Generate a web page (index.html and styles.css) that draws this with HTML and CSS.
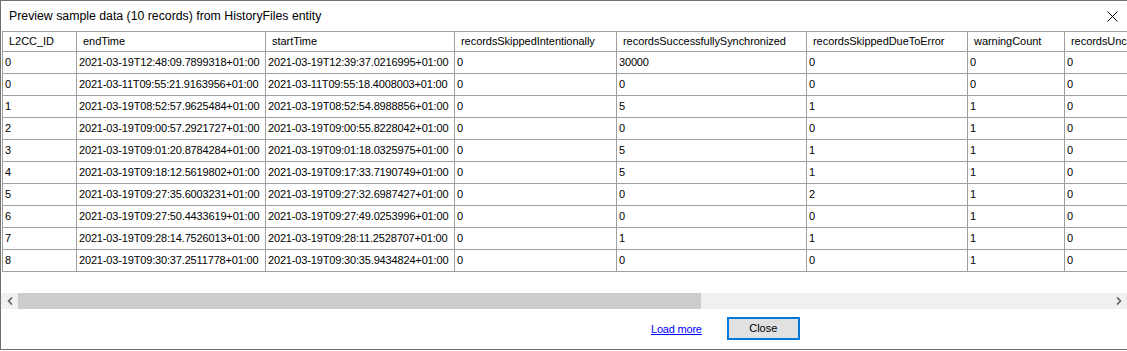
FILE: index.html
```html
<!DOCTYPE html>
<html lang="en">
<head>
    <meta charset="UTF-8">
    <title>Preview sample data</title>
    <link rel="stylesheet" href="styles.css">
</head>
<body>
    <div class="janela">
        <div class="titulo">
            <span>Preview sample data (10 records) from HistoryFiles entity</span>
            <svg class="fechar" width="11" height="11" viewBox="0 0 11 11">
                <path d="M0.5 0.5 L10.5 10.5 M10.5 0.5 L0.5 10.5" stroke="#000" stroke-width="1"/>
            </svg>
        </div>

        <div class="area-grade">
            <div class="grade">
                <div class="cab">L2CC_ID</div>
                <div class="cab">endTime</div>
                <div class="cab">startTime</div>
                <div class="cab">recordsSkippedIntentionally</div>
                <div class="cab">recordsSuccessfullySynchronized</div>
                <div class="cab">recordsSkippedDueToError</div>
                <div class="cab">warningCount</div>
                <div class="cab">recordsUnchanged</div>

                <div class="cel">0</div><div class="cel">2021-03-19T12:48:09.7899318+01:00</div><div class="cel">2021-03-19T12:39:37.0216995+01:00</div><div class="cel">0</div><div class="cel">30000</div><div class="cel">0</div><div class="cel">0</div><div class="cel">0</div>
                <div class="cel">0</div><div class="cel">2021-03-11T09:55:21.9163956+01:00</div><div class="cel">2021-03-11T09:55:18.4008003+01:00</div><div class="cel">0</div><div class="cel">0</div><div class="cel">0</div><div class="cel">0</div><div class="cel">0</div>
                <div class="cel">1</div><div class="cel">2021-03-19T08:52:57.9625484+01:00</div><div class="cel">2021-03-19T08:52:54.8988856+01:00</div><div class="cel">0</div><div class="cel">5</div><div class="cel">1</div><div class="cel">1</div><div class="cel">0</div>
                <div class="cel">2</div><div class="cel">2021-03-19T09:00:57.2921727+01:00</div><div class="cel">2021-03-19T09:00:55.8228042+01:00</div><div class="cel">0</div><div class="cel">0</div><div class="cel">0</div><div class="cel">1</div><div class="cel">0</div>
                <div class="cel">3</div><div class="cel">2021-03-19T09:01:20.8784284+01:00</div><div class="cel">2021-03-19T09:01:18.0325975+01:00</div><div class="cel">0</div><div class="cel">5</div><div class="cel">1</div><div class="cel">1</div><div class="cel">0</div>
                <div class="cel">4</div><div class="cel">2021-03-19T09:18:12.5619802+01:00</div><div class="cel">2021-03-19T09:17:33.7190749+01:00</div><div class="cel">0</div><div class="cel">5</div><div class="cel">1</div><div class="cel">1</div><div class="cel">0</div>
                <div class="cel">5</div><div class="cel">2021-03-19T09:27:35.6003231+01:00</div><div class="cel">2021-03-19T09:27:32.6987427+01:00</div><div class="cel">0</div><div class="cel">0</div><div class="cel">2</div><div class="cel">1</div><div class="cel">0</div>
                <div class="cel">6</div><div class="cel">2021-03-19T09:27:50.4433619+01:00</div><div class="cel">2021-03-19T09:27:49.0253996+01:00</div><div class="cel">0</div><div class="cel">0</div><div class="cel">0</div><div class="cel">1</div><div class="cel">0</div>
                <div class="cel">7</div><div class="cel">2021-03-19T09:28:14.7526013+01:00</div><div class="cel">2021-03-19T09:28:11.2528707+01:00</div><div class="cel">0</div><div class="cel">1</div><div class="cel">1</div><div class="cel">1</div><div class="cel">0</div>
                <div class="cel">8</div><div class="cel">2021-03-19T09:30:37.2511778+01:00</div><div class="cel">2021-03-19T09:30:35.9434824+01:00</div><div class="cel">0</div><div class="cel">0</div><div class="cel">0</div><div class="cel">1</div><div class="cel">0</div>
            </div>
        </div>

        <div class="rolagem">
            <div class="seta">
                <svg width="6" height="8" viewBox="0 0 6 8"><path d="M5 0.5 L1.5 4 L5 7.5" stroke="#606060" stroke-width="1.6" fill="none"/></svg>
            </div>
            <div class="trilho"><div class="polegar"></div></div>
            <div class="seta">
                <svg width="6" height="8" viewBox="0 0 6 8"><path d="M1 0.5 L4.5 4 L1 7.5" stroke="#606060" stroke-width="1.6" fill="none"/></svg>
            </div>
        </div>

        <div class="rodape">
            <a href="#" class="link">Load more</a>
            <button class="botao">Close</button>
        </div>
    </div>
</body>
</html>
```

FILE: styles.css
```css
body {
    margin: 0;
    font-family: "Liberation Sans", Arial, sans-serif;
    font-size: 11px;
    color: #000;
    background: #fff;
}
.janela {
    width: 1127px;
    height: 350px;
    box-sizing: border-box;
    border: 1px solid #707070;
    border-right: none;
    display: flex;
    flex-direction: column;
    overflow: hidden;
}
.titulo {
    height: 30px;
    flex: none;
    display: flex;
    align-items: center;
    justify-content: space-between;
    padding-left: 8px;
    padding-right: 9px;
    font-size: 12.3px;
}
.fechar {
    margin-top: 1px;
}
.area-grade {
    flex: none;
    margin-left: 1px;
    overflow: hidden;
}
.grade {
    display: grid;
    grid-template-columns: 74px 189px 189px 162px 190px 161px 97px 130px;
    width: max-content;
    border-left: 1px solid #a0a0a0;
    border-top: 1px solid #a0a0a0;
}
.cab, .cel {
    box-sizing: border-box;
    border-right: 1px solid #a0a0a0;
    border-bottom: 1px solid #a0a0a0;
    white-space: nowrap;
    overflow: hidden;
}
.cab {
    height: 20px;
    line-height: 19px;
    padding-left: 6px;
    letter-spacing: -0.05px;
}
.cel {
    height: 22px;
    line-height: 21px;
    padding-left: 2px;
    letter-spacing: -0.16px;
}
.rolagem {
    flex: none;
    display: flex;
    height: 16px;
    margin-top: 21px;
    background: #f0f0f0;
}
.seta {
    width: 17px;
    display: flex;
    align-items: center;
    justify-content: center;
}
.trilho {
    flex: 1;
}
.polegar {
    width: 683px;
    height: 100%;
    background: #cdcdcd;
}
.rodape {
    flex: 1;
    display: flex;
    align-items: center;
    gap: 25px;
    padding-left: 650px;
}
.link {
    color: #0000ff;
    text-decoration: underline;
    letter-spacing: -0.2px;
}
.botao {
    width: 73px;
    height: 23px;
    margin-top: -2px;
    border: 2px solid #0078d7;
    background: #e1e1e1;
    font-family: "Liberation Sans", Arial, sans-serif;
    font-size: 11px;
    color: #000;
    padding: 0;
}
```
